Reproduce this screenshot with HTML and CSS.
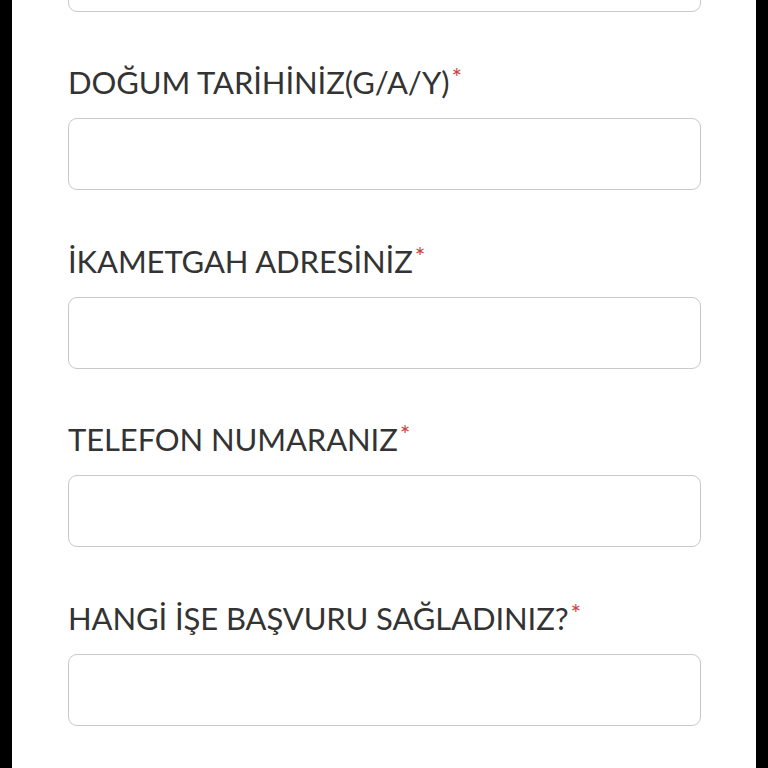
FILE: index.html
```html
<!DOCTYPE html>
<html lang="tr">
<head>
<meta charset="utf-8">
<link rel="stylesheet" href="styles.css">
</head>
<body>
<div class="frame">
  <form class="form">
    <div class="box box-first"></div>
    <div class="field">
      <label class="label">DOĞUM TARİHİNİZ(G/A/Y)<span class="req">*</span></label>
      <div class="box"></div>
    </div>
    <div class="field">
      <label class="label">İKAMETGAH ADRESİNİZ<span class="req">*</span></label>
      <div class="box"></div>
    </div>
    <div class="field">
      <label class="label">TELEFON NUMARANIZ<span class="req">*</span></label>
      <div class="box"></div>
    </div>
    <div class="field">
      <label class="label">HANGİ İŞE BAŞVURU SAĞLADINIZ?<span class="req">*</span></label>
      <div class="box"></div>
    </div>
  </form>
</div>
</body>
</html>
```
FILE: styles.css
```css
html, body {
  margin: 0;
  padding: 0;
  background: #000;
  height: 768px;
  overflow: hidden;
}
.frame {
  margin: 0 12px;
  width: 744px;
  height: 768px;
  background: #fff;
  overflow: hidden;
  font-family: Lato, "Open Sans", sans-serif;
}
.form {
  display: flex;
  flex-direction: column;
  padding: 0 55px 0 56px;
}
.box {
  box-sizing: border-box;
  height: 72px;
  border: 1.5px solid #c9c9c9;
  border-radius: 9px;
  background: #fff;
}
.box-first {
  margin-top: -60.5px;
}
.field {
  display: flex;
  flex-direction: column;
  margin-top: 52.5px;
}
.label {
  display: block;
  height: 36px;
  font-size: 31px;
  line-height: 36px;
  color: #333;
  margin-bottom: 18px;
  letter-spacing: -0.1px;
}
.req {
  color: #c9433f;
  font-size: 25px;
  line-height: 0;
  vertical-align: 7px;
  margin-left: 2px;
}
```
